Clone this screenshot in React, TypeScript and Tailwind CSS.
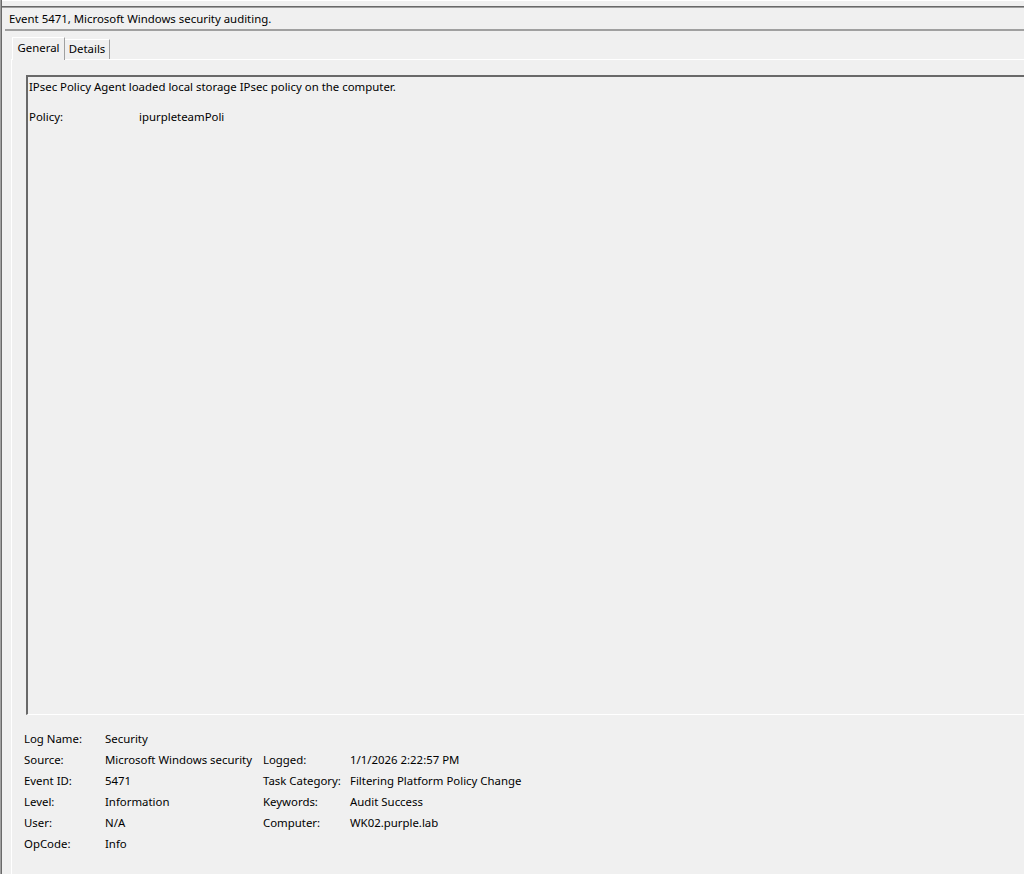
import React from 'react';

const rowsLeft = [
  ['Log Name:', 'Security'],
  ['Source:', 'Microsoft Windows security'],
  ['Event ID:', '5471'],
  ['Level:', 'Information'],
  ['User:', 'N/A'],
  ['OpCode:', 'Info'],
];

const rowsRight: (string[] | null)[] = [
  null,
  ['Logged:', '1/1/2026 2:22:57 PM'],
  ['Task Category:', 'Filtering Platform Policy Change'],
  ['Keywords:', 'Audit Success'],
  ['Computer:', 'WK02.purple.lab'],
  null,
];

export default function App() {
  return (
    <div
      className="w-[1024px] h-[874px] bg-[#f0f0f0] text-black text-[11.4px] leading-none overflow-hidden flex"
      style={{ fontFamily: '"Noto Sans", "Liberation Sans", sans-serif' }}
    >
      {/* left window edge */}
      <div className="w-[1px] bg-[#a0a0a0]" />
      <div className="w-[1px] bg-[#696969]" />
      <div className="flex-1 flex flex-col min-w-0">
        {/* top strip */}
        <div className="h-[6px] border-t border-white" />
        <div className="h-[2px] bg-[#696969] border-b border-[#a0a0a0]" />

        {/* header */}
        <div className="h-[21px] flex items-center pl-[7px] whitespace-nowrap">
          Event 5471, Microsoft Windows security auditing.
        </div>
        <div className="h-[2px] ml-[3px] bg-[#a0a0a0]" />

        {/* tabs */}
        <div className="flex-1 flex flex-col pl-[9px] pt-[5px] min-h-0">
          <div className="flex items-end h-[23px] pl-[1px]">
            <div className="h-[23px] w-[53px] -mb-[1px] relative z-10 bg-[#f0f0f0] border-l border-t border-white border-r border-r-[#a0a0a0] flex items-start pt-[4px] justify-center">
              General
            </div>
            <div className="h-[20px] w-[45px] border-t border-white border-r border-r-[#a0a0a0] flex items-start pt-[3px] justify-center">
              Details
            </div>
          </div>
          <div className="flex-1 border-l border-t border-white flex flex-col pl-[14px] pt-[15px] min-h-0">
            {/* description box */}
            <div className="h-[640px] border-l-2 border-t-2 border-l-[#696969] border-t-[#696969] border-b border-b-white shrink-0">
              <div className="pl-[1px] pt-[2px] whitespace-nowrap">
                <div className="h-[16px] flex items-center">
                  IPsec Policy Agent loaded local storage IPsec policy on the computer.
                </div>
                <div className="h-[14px]" />
                <div className="h-[16px] flex items-center">
                  <span className="w-[110px]">Policy:</span>
                  <span>ipurpleteamPoli</span>
                </div>
              </div>
            </div>

            {/* properties */}
            <div className="pt-[13px] -ml-[2px] flex flex-col">
              {rowsLeft.map((r, i) => (
                <div key={r[0]} className="h-[21px] flex items-center whitespace-nowrap">
                  <span className="w-[81px]">{r[0]}</span>
                  <span className="w-[158px]">{r[1]}</span>
                  {rowsRight[i] && (
                    <>
                      <span className="w-[87px]">{rowsRight[i]![0]}</span>
                      <span>{rowsRight[i]![1]}</span>
                    </>
                  )}
                </div>
              ))}
            </div>
          </div>
        </div>
      </div>
    </div>
  );
}
